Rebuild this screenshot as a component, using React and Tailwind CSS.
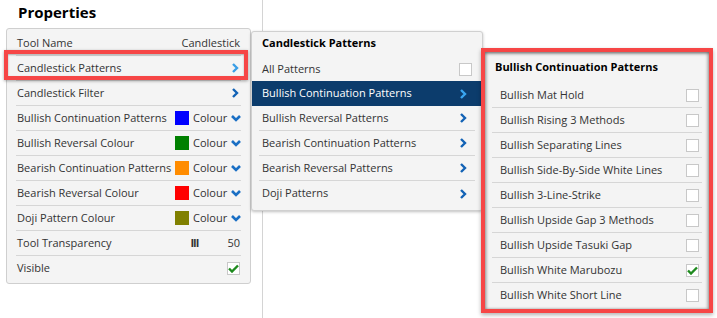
import React from "react";

const props = [
    { label: "Bullish Continuation Patterns", color: "bg-[#0000ff]" },
    { label: "Bullish Reversal Colour", color: "bg-[#008000]" },
    { label: "Bearish Continuation Patterns", color: "bg-[#ff8c00]" },
    { label: "Bearish Reversal Colour", color: "bg-[#ff0000]" },
    { label: "Doji Pattern Colour", color: "bg-[#808000]" },
];

const menu = [
    "Bullish Reversal Patterns",
    "Bearish Continuation Patterns",
    "Bearish Reversal Patterns",
    "Doji Patterns",
];

const bullish = [
    "Bullish Mat Hold",
    "Bullish Rising 3 Methods",
    "Bullish Separating Lines",
    "Bullish Side-By-Side White Lines",
    "Bullish 3-Line-Strike",
    "Bullish Upside Gap 3 Methods",
    "Bullish Upside Tasuki Gap",
    "Bullish White Marubozu",
    "Bullish White Short Line",
];

function ChevronRight({ className }) {
    return (
        <svg width="8" height="10" viewBox="0 0 8 10" className={className}>
            <path d="M2 1 L6 5 L2 9" fill="none" stroke="currentColor" strokeWidth="2.4" />
        </svg>
    );
}

function ChevronDown() {
    return (
        <svg width="10" height="8" viewBox="0 0 10 8" className="text-[#1a6fc4]">
            <path d="M1 2 L5 6 L9 2" fill="none" stroke="currentColor" strokeWidth="2.6" />
        </svg>
    );
}

function Check({ checked }) {
    return (
        <div className="w-[13px] h-[13px] bg-white border border-[#c8c8c8] flex items-center justify-center">
            {checked && (
                <svg width="11" height="9" viewBox="0 0 11 9">
                    <path d="M1 4.5 L4 7.5 L10 1.5" fill="none" stroke="#1e8a1e" strokeWidth="2.4" />
                </svg>
            )}
        </div>
    );
}

export default function App() {
    return (
        <div className="relative w-[717px] h-[318px] bg-white overflow-hidden font-['Open_Sans',sans-serif] text-[11px] text-[#333]">
            <div className="flex h-full">
                <div className="w-[263px] h-full border-r border-[#d4d4d4]">
                    <div className="pl-[18px] pt-[1px] text-[15px] font-bold text-black leading-[22px]">Properties</div>
                    <div className="ml-[6px] mt-[5px] w-[245px] border border-[#cfcfcf] rounded-[3px] bg-[#f4f4f4] px-[9px] pt-[2px] pb-[2px]">
                        <div className="h-[25px] flex items-center justify-between border-b border-[#d6d6d6] pl-[1px]">
                            <span>Tool Name</span>
                            <span className="pr-[1px]">Candlestick</span>
                        </div>
                        <div className="h-[25px] flex items-center justify-between border-b border-[#d6d6d6] pl-[1px] pr-[2px]">
                            <span>Candlestick Patterns</span>
                            <ChevronRight className="text-[#3a9ee6]" />
                        </div>
                        <div className="h-[25px] flex items-center justify-between border-b border-[#d6d6d6] pl-[1px] pr-[2px]">
                            <span>Candlestick Filter</span>
                            <ChevronRight className="text-[#1262b5]" />
                        </div>
                        {props.map((p) => (
                            <div key={p.label} className="h-[25px] flex items-center border-b border-[#d6d6d6] pl-[1px]">
                                <span className="flex-1">{p.label}</span>
                                <div className={`w-[14px] h-[14px] ${p.color} mr-[4px]`} />
                                <span className="w-[38px]">Colour</span>
                                <ChevronDown />
                            </div>
                        ))}
                        <div className="h-[25px] flex items-center border-b border-[#d6d6d6] pl-[1px]">
                            <span className="flex-1">Tool Transparency</span>
                            <span className="font-bold tracking-[-1px] mr-[29px]">III</span>
                            <span className="pr-[1px]">50</span>
                        </div>
                        <div className="h-[25px] flex items-center justify-between pl-[1px] pr-[1px]">
                            <span>Visible</span>
                            <Check checked />
                        </div>
                    </div>
                </div>
            </div>

            {/* highlight on Candlestick Patterns row */}
            <div className="absolute left-[4px] top-[50px] w-[244px] h-[30px] border-4 border-[#f64646] shadow-[0_1px_3px_rgba(0,0,0,0.35),inset_0_1px_2px_rgba(0,0,0,0.3)]" />

            {/* candlestick patterns menu */}
            <div className="absolute left-[251px] top-[31px] w-[232px] h-[180px] bg-[#f4f4f4] border border-[#d0d0d0] rounded-[3px] shadow-[0_1px_3px_rgba(0,0,0,0.25)]">
                <div className="pl-[10px] h-[20px] pt-[2px] font-bold text-black leading-[18px]">Candlestick Patterns</div>
                <div className="mx-[7px] h-[25px] mt-[5px] flex items-center justify-between border-b border-[#d6d6d6] pl-[3px] pr-[3px]">
                    <span>All Patterns</span>
                    <Check />
                </div>
                <div className="h-[25px] -mt-[1px] flex items-center justify-between bg-[#0c3c6c] text-white pl-[10px] pr-[15px]">
                    <span>Bullish Continuation Patterns</span>
                    <ChevronRight className="text-[#3aa6f0]" />
                </div>
                {menu.map((m, i) => (
                    <div key={m} className={`mx-[7px] h-[25px] flex items-center justify-between pl-[3px] pr-[8px] ${i < menu.length - 1 ? "border-b border-[#d6d6d6]" : ""}`}>
                        <span>{m}</span>
                        <ChevronRight className="text-[#1262b5]" />
                    </div>
                ))}
            </div>

            {/* bullish continuation submenu */}
            <div className="absolute left-[481px] top-[48px] w-[232px] h-[265px] border-4 border-[#f64646] shadow-[0_2px_4px_rgba(0,0,0,0.3)]">
                <div className="h-full bg-[#f4f4f4] shadow-[inset_0_2px_3px_rgba(0,0,0,0.35),inset_-2px_0_3px_rgba(0,0,0,0.2),inset_2px_0_3px_rgba(0,0,0,0.2)] px-[7px]">
                    <div className="pl-[3px] pt-[6px] h-[31px] font-bold text-black leading-[18px]">Bullish Continuation Patterns</div>
                    {bullish.map((b, i) => (
                        <div key={b} className={`h-[25px] flex items-center justify-between pl-[8px] pr-[3px] ${i < bullish.length - 1 ? "border-b border-[#d6d6d6]" : ""}`}>
                            <span>{b}</span>
                            <Check checked={b === "Bullish White Marubozu"} />
                        </div>
                    ))}
                </div>
            </div>
        </div>
    );
}
